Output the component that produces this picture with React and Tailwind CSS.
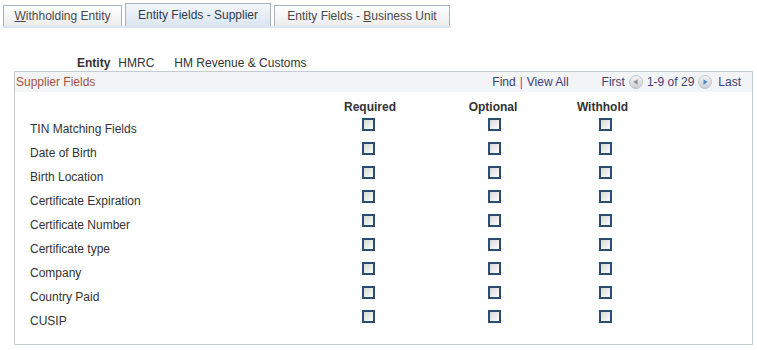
const fields = [
  'TIN Matching Fields',
  'Date of Birth',
  'Birth Location',
  'Certificate Expiration',
  'Certificate Number',
  'Certificate type',
  'Company',
  'Country Paid',
  'CUSIP',
];

const columns = ['Required', 'Optional', 'Withhold'];
const colWidths = ['w-[76px]', 'w-[176px]', 'w-[46px]'];
const headShift = ['ml-[4px]', '-ml-[2px]', '-ml-[5px]'];

const Checkbox = () => (
  <span className="block w-[13px] h-[13px] border-2 border-[#2a4d72] bg-linear-to-br from-[#d9d9d6] to-[#fcfcfc]" />
);

const NavArrow = ({ dir, active }) => (
  <svg width="14" height="14" viewBox="0 0 14 14" className="inline-block">
    <defs>
      <linearGradient id={`g-${dir}`} x1="0" y1="0" x2="0" y2="1">
        <stop offset="0" stopColor="#f4f4f4" />
        <stop offset="1" stopColor="#c9ccd0" />
      </linearGradient>
    </defs>
    <circle cx="7" cy="7" r="6.5" fill={`url(#g-${dir})`} stroke="#c2c6cc" />
    {dir === 'left' ? (
      <path d="M4.5 7 L8.5 4.2 L8.5 9.8 Z" fill={active ? '#4a86c8' : '#8a8e94'} />
    ) : (
      <path d="M9.5 7 L5.5 4.2 L5.5 9.8 Z" fill={active ? '#4a86c8' : '#8a8e94'} />
    )}
  </svg>
);

const App = () => {
  return (
    <div
      className="w-[757px] h-[350px] bg-white text-[12px] text-[#333] overflow-hidden"
      style={{ fontFamily: '"Liberation Sans", Arial, sans-serif' }}
    >
      {/* Tabs */}
      <div className="pl-[3px] pt-[3px]">
        <div className="flex items-end w-[447px] gap-[3px]">
          <div className="h-[21px] px-[10px] flex items-center border border-b-0 border-[#a7b0bd] bg-gradient-to-b from-white to-[#ececec] text-[#4a4a4a] w-[119px] justify-center">
            <span><span className="underline">W</span>ithholding Entity</span>
          </div>
          <div className="h-[23px] flex items-center justify-center border border-b-0 border-[#a7b0bd] bg-gradient-to-b from-[#f2f6fa] to-[#dbe6f1] text-[#2f3b4f] w-[146px]">
            Entity Fields - Supplier
          </div>
          <div className="h-[21px] flex items-center justify-center border border-b-0 border-[#a7b0bd] bg-gradient-to-b from-white to-[#ececec] text-[#4a4a4a] w-[176px]">
            <span>Entity Fields - <span className="underline">B</span>usiness Unit</span>
          </div>
        </div>
        <div className="w-[448px] h-[2px] bg-[#dbe5f0]" />
      </div>

      {/* Entity */}
      <div className="flex items-center h-[14px] mt-[28px] pl-[77px] leading-[14px]">
        <span className="font-bold text-[#333]">Entity</span>
        <span className="ml-[8px] text-[#333]">HMRC</span>
        <span className="ml-[20px] text-[#333]">HM Revenue &amp; Customs</span>
      </div>

      {/* Grid box */}
      <div className="ml-[14px] mt-[1px] w-[739px] border border-[#c5cbd5]">
        <div className="h-[20px] bg-[#f2f4f6] flex items-center pl-[1px] pr-[11px] leading-[14px]">
          <span className="text-[#a6553d]">Supplier Fields</span>
          <span className="ml-auto flex items-center">
            <span className="text-[#3d4176]">Find</span>
            <span className="mx-[4px] text-[#c4306f]">|</span>
            <span className="text-[#3d4176]">View All</span>
            <span className="ml-[33px] text-[#3d4176]">First</span>
            <span className="ml-[4px]"><NavArrow dir="left" /></span>
            <span className="ml-[4px] text-[#3d4176]">1-9 of 29</span>
            <span className="ml-[4px]"><NavArrow dir="right" active /></span>
            <span className="ml-[6px] text-[#3d4176]">Last</span>
          </span>
        </div>

        <div className="flex h-[25px] pt-[8px] leading-[14px]">
          <div className="w-[315px]" />
          {columns.map((c, i) => (
            <div key={c} className={`${colWidths[i]} flex justify-center font-bold text-[#333] whitespace-nowrap`}>
              <span className={headShift[i]}>{c}</span>
            </div>
          ))}
        </div>

        <div className="pb-[11px]">
          {fields.map((f) => (
            <div key={f} className="flex h-[24px]">
              <div className="w-[315px] pl-[15px] leading-[24px] text-[#333]">{f}</div>
              {colWidths.map((w, i) => (
                <div key={i} className={`${w} flex justify-center pt-[1px]`}>
                  <Checkbox />
                </div>
              ))}
            </div>
          ))}
        </div>
      </div>
    </div>
  );
};

export default App;
